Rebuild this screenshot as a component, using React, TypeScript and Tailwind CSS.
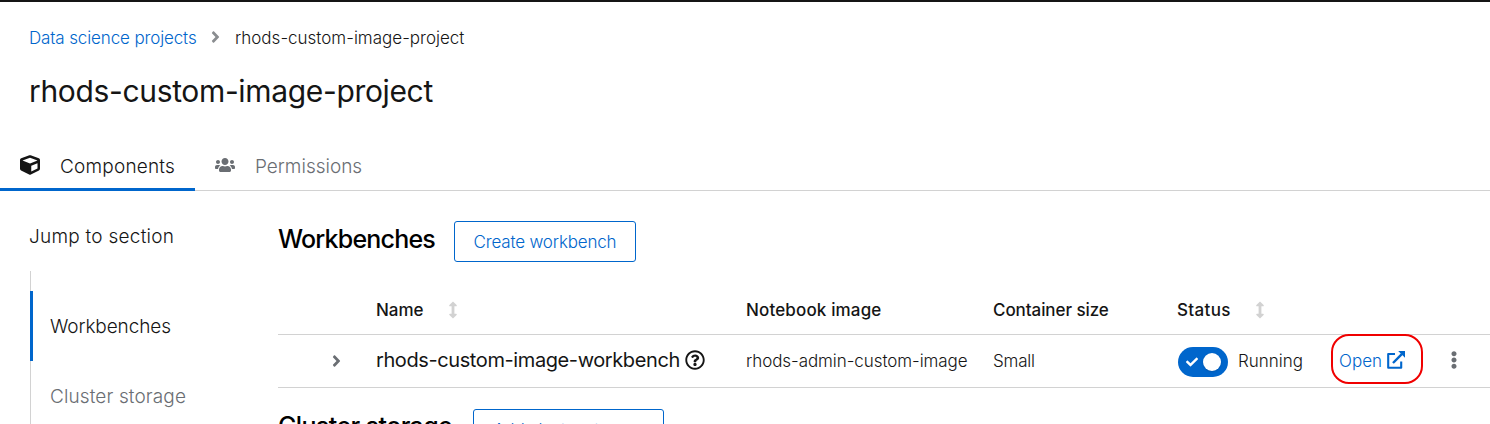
import { FaCube, FaUsers, FaAngleRight, FaEllipsisV, FaCheck, FaRegQuestionCircle } from 'react-icons/fa';

const columns = 'grid grid-cols-[98px_370px_247px_184px_161px_1fr]';

function ExternalLinkIcon() {
  return (
    <svg viewBox="0 0 18 18" className="-mt-[2px] h-[18px] w-[18px]" fill="none" stroke="currentColor">
      <path d="M8 3H1.2v13.8H14.2V10.5" strokeWidth="2.1" strokeLinejoin="round" />
      <path d="M6 12L14.8 3.2" strokeWidth="2.4" />
      <path d="M11.2 0H18v6.8z" fill="currentColor" stroke="none" />
    </svg>
  );
}

function SortIcon() {
  return (
    <svg viewBox="0 0 8 18" className="mt-[3px] h-[18px] w-2 text-[#d2d2d2]" fill="currentColor">
      <path d="M4 .5L7.6 4.1Q8.2 5.3 7 5.3H5.4V12.7H7Q8.2 12.7 7.6 13.9L4 17.5.4 13.9Q-.2 12.7 1 12.7H2.6V5.3H1Q-.2 5.3.4 4.1z" />
    </svg>
  );
}

export default function App() {
  return (
    <div className="h-[424px] w-[1490px] overflow-hidden border-t-2 border-[#151515] bg-white font-['Inter','Liberation_Sans',sans-serif] text-[17px] leading-6 font-light text-[#151515]">
      <nav className="flex h-[49px] items-start pt-[24px] pl-[29px] whitespace-nowrap">
        <span className="w-[181px] tracking-[-0.13px] text-[#0066cc]">Data science projects</span>
        <FaAngleRight className="mt-[2px] h-[18px] w-[11px] text-[#8a8d90]" />
        <span className="ml-[14px]">rhods-custom-image-project</span>
      </nav>
      <h1 className="h-[92px] pt-[19px] pl-[29px] text-[30px] leading-[42px] font-normal tracking-[-0.34px]">rhods-custom-image-project</h1>
      <div className="flex h-[48px] border-b border-[#d2d2d2] text-[19px]">
        <div className="-mb-px flex w-[195px] border-b-3 border-[#0066cc] pt-[12px] pl-5">
          <FaCube className="h-5 w-5" />
          <span className="ml-5 tracking-[0.2px]">Components</span>
        </div>
        <div className="flex pt-[12px] pl-5 text-[#6a6e73]">
          <FaUsers className="h-5 w-5" />
          <span className="ml-5">Permissions</span>
        </div>
      </div>
      <div className="flex">
        <aside className="w-[278px] shrink-0 pt-[34px] pl-[30px] text-[19px]">
          <div className="-ml-px h-[46px] tracking-[0.25px]">Jump to section</div>
          <div className="h-[200px] border-l border-[#d2d2d2] pt-5">
            <div className="-ml-px flex h-[70px] items-center border-l-3 border-[#0066cc] pt-[2px] pl-[17px] tracking-[-0.1px]">Workbenches</div>
            <div className="flex h-[70px] items-center pt-[2px] pl-[19px] tracking-[0.12px] text-[#6a6e73]">Cluster storage</div>
          </div>
        </aside>
        <main className="w-[1212px] shrink-0 pt-[30px]">
          <div className="flex h-[65px]">
            <h2 className="w-[176px] pt-[3px] text-[25px] leading-[30px] font-medium tracking-[-0.8px] text-black">Workbenches</h2>
            <button className="h-[41px] w-[182px] rounded-[3px] border border-[#0066cc] tracking-[-0.17px] text-[#0066cc]">Create workbench</button>
          </div>
          <div className={`${columns} h-[49px] border-b border-[#d2d2d2] pt-[12px] font-medium`}>
            <span />
            <div className="flex"><span className="w-[73px]">Name</span><SortIcon /></div>
            <span className="tracking-[0.15px]">Notebook image</span>
            <span className="tracking-[-0.07px]">Container size</span>
            <div className="flex"><span className="w-[79px] tracking-[0.35px]">Status</span><SortIcon /></div>
          </div>
          <div className={`${columns} h-[53px] items-center border-b border-[#d2d2d2]`}>
            <FaAngleRight className="ml-[54px] h-[18px] w-[9px] text-[#6a6e73]" />
            <div className="-mt-[2px] flex items-center text-[20px] font-normal tracking-[-0.4px] whitespace-nowrap">rhods-custom-image-workbench<FaRegQuestionCircle className="ml-[5px] h-5 w-5" /></div>
            <span className="tracking-[-0.07px]">rhods-admin-custom-image</span>
            <span className="tracking-[-0.2px]">Small</span>
            <div className="flex items-center">
              <div className="mt-px mr-[10px] ml-px flex h-[30px] w-[50px] items-center justify-between rounded-full bg-[#0066cc] pr-[7px] pl-2">
                <FaCheck className="h-3 w-3 text-white" />
                <span className="h-[18px] w-[18px] rounded-full bg-white shadow-sm" />
              </div>
              <span>Running</span>
            </div>
            <div className="flex items-center">
              <div className="-mt-[5px] -ml-[7px] flex h-[50px] w-[92px] items-center rounded-[18px] border-2 border-[#f00000] pt-[5px] pl-[6px] text-[#0066cc]">
                <span className="mr-[5px]">Open</span><ExternalLinkIcon />
              </div>
              <FaEllipsisV className="-mt-[2px] ml-[26px] h-[18px] w-[10px] text-[#6a6e73]" />
            </div>
          </div>
          <div className="flex pt-[21px]">
            <h2 className="w-[195px] pt-[2px] text-[25px] leading-[30px] font-medium tracking-[-0.6px] text-black">Cluster storage</h2>
            <button className="h-[41px] w-[191px] rounded-[3px] border border-[#0066cc] tracking-[-0.17px] text-[#0066cc]">Add cluster storage</button>
          </div>
        </main>
      </div>
    </div>
  );
}
